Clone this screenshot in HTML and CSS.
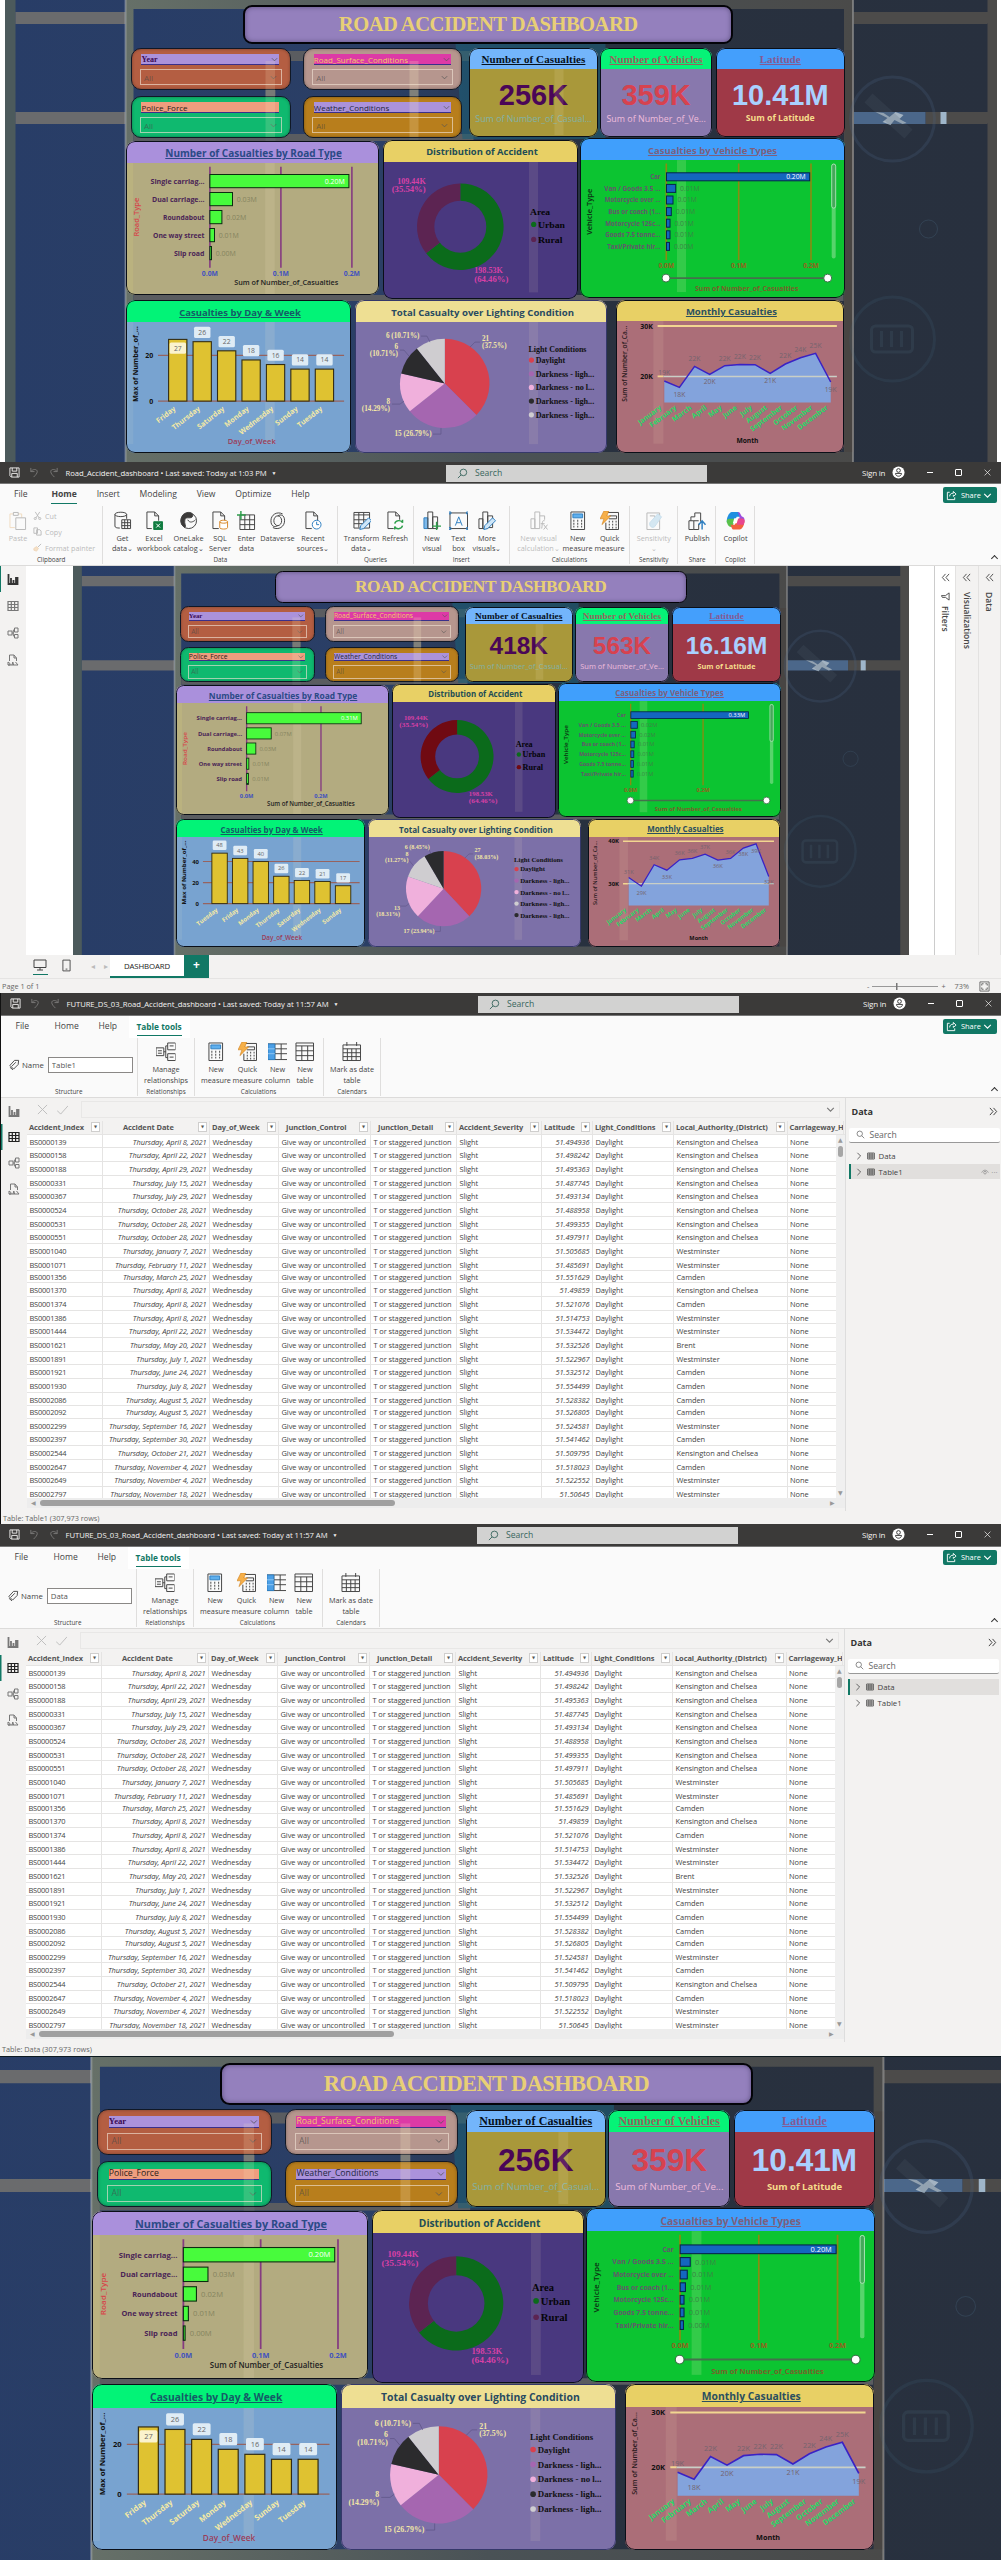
FILE: index.html
```html
<!DOCTYPE html>
<html lang="en">
<head>
<meta charset="utf-8">
<title>Road Accident Dashboard</title>
<link rel="stylesheet" href="styles.css">
</head>
<body>
<svg class="sprite" aria-hidden="true">
  <symbol id="save" viewBox="0 0 12 12"><path d="M1 1h10v10H2.5L1 9.500zM3.500 1v3.500h5V1M3 11V7h6v4" /></symbol>
  <symbol id="undo" viewBox="0 0 12 12"><path d="M2 1v4h4M2 5c2-3 7-3 7 0 0 2-2 4-4 6"/></symbol>
  <symbol id="redo" viewBox="0 0 12 12"><path d="M10 1v4H6M10 5C8 2 3 2 3 5c0 2 2 4 4 6"/></symbol>
  <symbol id="search" viewBox="0 0 12 12"><circle cx="7" cy="4.800" r="3.600"/><path d="M4.500 7.500 1 11"/></symbol>
  <symbol id="search-r" viewBox="0 0 12 12"><circle cx="5" cy="5" r="3.600"/><path d="M7.600 7.600 11 11"/></symbol>
  <symbol id="user" viewBox="0 0 14 14"><circle cx="7" cy="7" r="6.500" fill="#fff" stroke="none"/><circle cx="7" cy="4.800" r="2" stroke="#333"/><path d="M3.800 8h6.400c0 4-6.400 4-6.400 0z" stroke="#333"/></symbol>
  <symbol id="share" viewBox="0 0 12 12"><path d="M4 2.500H1.500v8h8V8M4 7c0-2.500 1.500-3.500 4-3.500V1.500L11 4.500 8 7V5.300"/></symbol>
  <symbol id="down" viewBox="0 0 10 10"><path d="M2 3.500 5 6.500 8 3.500"/></symbol>
  <symbol id="right" viewBox="0 0 10 10"><path d="M3 1 7 5 3 9"/></symbol>
  <symbol id="dbl-left" viewBox="0 0 10 10"><path d="M5 1 1.500 5 5 9M9 1 5.500 5 9 9"/></symbol>
  <symbol id="dbl-right" viewBox="0 0 10 10"><path d="M1 1 4.500 5 1 9M5 1l3.500 4L5 9"/></symbol>
  <symbol id="funnel" viewBox="0 0 10 10"><path d="M1 1h8L6 5v3.500L4 9.500V5z"/></symbol>
  <symbol id="v-report" viewBox="0 0 12 12"><path d="M1.500 1v10h9V4M4 5v6M6.500 7v4M9 4v7" stroke-width="1.800"/></symbol>
  <symbol id="v-table" viewBox="0 0 12 12"><path d="M1 1.500h10v9H1zM1 4.500h10M1 7.500h10M4.300 1.500v9M7.600 1.500v9" stroke-width="1.200"/></symbol>
  <symbol id="v-model" viewBox="0 0 12 12"><path d="M1 4h4v4H1zM7.500 1h3.500v4H7.500zM7.500 7.500h3.500V11H7.500zM5 6h1.300M7.500 3H6.300v6h1.200"/></symbol>
  <symbol id="v-dax" viewBox="0 0 12 12"><path d="M2.500 7V1H7l2.500 3v3M7 1v3h2.500M1 8v3h2V9.500zM5 11l.8-3 .8 3M8.500 8l2.500 3h-10"/></symbol>
  <symbol id="paste" viewBox="0 0 20 20"><path d="M7 17H2V3h12v4" stroke="#e3a85c"/><path d="M5.500 1.500h5v3h-5zM8 7h10v12H8z" fill="#fafafa"/></symbol>
  <symbol id="cut" viewBox="0 0 10 10"><path d="M2.500 1 7 8M7.500 1 3 8"/><circle cx="2.500" cy="8.400" r="1.200"/><circle cx="7.500" cy="8.400" r="1.200"/></symbol>
  <symbol id="copy" viewBox="0 0 10 10"><path d="M1 1h4v6H1zM4 3h3.500L9 4.500V9H4z"/></symbol>
  <symbol id="brush" viewBox="0 0 10 10"><path d="M9 1 5 5"/><path d="m1 6 3-2 2 2-2 3-3-1z" fill="#ecb26a" stroke="#dd9440"/></symbol>
  <symbol id="getdata" viewBox="0 0 20 20"><path d="M2 3.500C2 .5 14 .5 14 3.500S2 6.500 2 3.500v12c0 1.500 2 2 5 2M14 3.500V8"/><path d="M9 9h9v9H9zM9 12h9M9 15h9M12 9v9M15 9v9" fill="#fafafa"/></symbol>
  <symbol id="excel" viewBox="0 0 20 20"><path d="M8 18H3V1h8l4 4v5M11 1v4h4"/><path d="M10 11h9v8h-9z" fill="#107c41" stroke="#107c41"/><path d="m12.500 13 4 4M16.500 13l-4 4" stroke="#fff"/></symbol>
  <symbol id="onelake" viewBox="0 0 20 20"><circle cx="10" cy="10" r="8"/><path d="M4 4C8 0 15 1 14 5S7 5 6 9s2 7 0 8C1 14 1 8 4 4z" fill="#3b3a39"/><path d="M9 9c2 4 6 2 8 0"/></symbol>
  <symbol id="sql" viewBox="0 0 20 20"><path d="M9 18H3V1h8l4 4v5M11 1v4h4"/><path d="M10 11c0-2 8-2 8 0v6c0 2-8 2-8 0zM10 11c0 2 8 2 8 0" stroke="#d98a2b" fill="#fff"/></symbol>
  <symbol id="enter" viewBox="0 0 20 20"><path d="M3 4h15v15H3zM3 9h15M3 14h15M8 4v15M13 4v15"/><path d="M4 0v9M0 4h9" stroke="#2e9e4b" stroke-width="1.500"/></symbol>
  <symbol id="dataverse" viewBox="0 0 20 20"><path d="M15 3C9 0 3 4 3 10s4 7 7 5M5 17c6 3 12-1 12-7s-4-7-7-5"/><ellipse cx="10" cy="10" rx="4" ry="5"/></symbol>
  <symbol id="recent" viewBox="0 0 20 20"><path d="M9 18H3V1h8l4 4v5M11 1v4h4"/><circle cx="14" cy="14" r="4.500" stroke="#2f7fc1" fill="#fff"/><path d="M14 11v3h2.500" stroke="#2f7fc1"/></symbol>
  <symbol id="transform" viewBox="0 0 20 20"><path d="M2 1.500h16v16H2zM2 4h16M2 9h16M2 13h16M7 2v15M12 2v15"/><path d="m8 19 1-4 8-8 3 3-8 8z" fill="#cfe6f8" stroke="#2f7fc1"/></symbol>
  <symbol id="refresh" viewBox="0 0 20 20"><path d="M9 18H3V1h8l4 4v4M11 1v4h4"/><path d="M10 13c1-4 7-4 8-1V9M18 15c-1 4-7 4-8 1v3" stroke="#2e9e4b" stroke-width="1.500"/></symbol>
  <symbol id="newvisual" viewBox="0 0 20 20"><path d="M2 7h4v11H2z" fill="#7db9ea" stroke="#2f7fc1"/><path d="M6 1h5v17H6zM11 6h5v12h-5z"/><path d="M15 11v9M10.500 15.500h9" stroke="#2e9e4b" stroke-width="1.500"/></symbol>
  <symbol id="textbox" viewBox="0 0 20 20"><path d="M1 2h18v16H1z"/><path d="m6.500 15 3.500-9 3.500 9M8 12h4M0 1h2v2H0zM18 1h2v2h-2zM0 17h2v2H0zM18 17h2v2h-2z" stroke="#2f7fc1"/></symbol>
  <symbol id="morevisual" viewBox="0 0 20 20"><path d="M2 8h4v10H2zM6 1h5v17H6zM11 5h5v12h-5z"/><path d="m7 19 1-4 8-8 3 3-8 8z" fill="#cfe6f8" stroke="#2f7fc1"/></symbol>
  <symbol id="viscalc" viewBox="0 0 20 20"><path d="M2 8h4v10H2zM6 1h5v17H6zM11 5h5v4"/><path d="M16 10c-3-1-2 3-3 8M12 13h4M15 14l4 5M19 14l-4 5"/></symbol>
  <symbol id="measure" viewBox="0 0 20 20"><path d="M3 1h14v18H3z"/><path d="M5 3h10v4H5z" fill="#5fb0ee" stroke="#2f7fc1"/><path d="M5.500 10h1M9.500 10h1M13.500 10h1M5.500 13h1M9.500 13h1M13.500 13h1M5.500 16h1M9.500 16h1M13.500 16h1" stroke-width="2"/></symbol>
  <symbol id="quick" viewBox="0 0 20 20"><path d="M7 1.500h12v17.500H6v-7M9.500 5H17v3H9"/><path d="M9 11h1M12.500 11h1M16 11h1M9 14h1M12.500 14h1M16 14h1M9 17h1M12.500 17h1M16 17h1" stroke-width="1.800"/><path d="M4 0h5L7 5h4L2 14l2-6H0z" fill="#f6b04a" stroke="#cf7f1d" stroke-width=".6"/></symbol>
  <symbol id="column" viewBox="0 0 20 20"><path d="M0 2h20v16H0zM0 7h20M0 12h20M7 2v16M13.500 2v16"/><path d="M0 2h7v16H0z" fill="#4b9fe6" stroke="#2f7fc1"/><path d="M0 7h7M0 12h7" stroke="#8fc6f3"/></symbol>
  <symbol id="table" viewBox="0 0 20 20"><path d="M1 1h18v18H1zM1 4h18M1 9h18M1 14h18M7 4v15M13 4v15"/></symbol>
  <symbol id="calendar" viewBox="0 0 20 20"><path d="M1 3h18v16H1zM1 7h18M1 11h18M1 15h18M5.500 7v12M10 7v12M14.500 7v12M5 0v4M15 0v4"/></symbol>
  <symbol id="relations" viewBox="0 0 20 20"><path d="M0 6h8v8H0zM12 1h8v7h-8zM12 12h8v7h-8zM8 10h2M12 4h-2v12h2M14 4h4M14 15.500h4M2 9h4M2 11.500h4"/></symbol>
  <symbol id="sens" viewBox="0 0 20 20"><path d="M3 2h13v17H3zM6 5h5v5"/><path d="m6 12 8-9 4 3-7 10c-2 2-6 0-5-4z" fill="#8fc4e4" stroke="#6fb0d6"/></symbol>
  <symbol id="publish" viewBox="0 0 20 20"><path d="M2 10h5v9H2zM4 10V6h4V2h6v9M7 10h5M7 19h5v-6"/><path d="M15.500 19V11M12 14l3.500-4L19 14" stroke="#2f7fc1" stroke-width="1.500"/></symbol>
  <symbol id="copilot" viewBox="0 0 20 20"><g stroke="none"><path d="M6 1h6c3 0 2 5 4 5h-5L8 12H1C0 8 3 1 6 1z" fill="#1f8fe0"/><path d="M1 12c-1-3 1-4 3-4h5l-2 7c-1 3-5 1-6-3z" fill="#58c14a"/><path d="M12 1c3 0 3 4 5 5 3 1 2 5 1 8h-6l2-8z" fill="#9a4de0"/><path d="M8 19c-3 0-2-5-4-5h5l3-6h5c4 0 1 11-3 11z" fill="#f2603e"/><path d="M12 8h5c3 0 2 4 1 6h-7z" fill="#e8468f"/></g><path d="M8.500 7.500h4l-1.500 5H7z" fill="#fff" stroke="none"/></symbol>
  <symbol id="tag" viewBox="0 0 12 12"><path d="M1 7 6 1.500h4.500L10 6l-5 5zM3 8l4.500-4.500M1 9l3.500 3"/></symbol>
  <symbol id="cross" viewBox="0 0 12 12"><path d="m1 1 10 10M11 1 1 11"/></symbol>
  <symbol id="check" viewBox="0 0 12 12"><path d="m0 7 4 4 8-9"/></symbol>
  <symbol id="desktop" viewBox="0 0 14 12"><path d="M1 1h12v7.500H1zM7 8.500V11M4 11h6"/></symbol>
  <symbol id="phone" viewBox="0 0 10 14"><path d="M1 1h8v12H1zM4 11h2"/></symbol>
  <symbol id="fit" viewBox="0 0 12 12"><path d="M1 1h10v10H1zM3 5V3h2M7 3h2v2M9 7v2H7M5 9H3V7"/></symbol>
  <symbol id="eye" viewBox="0 0 12 8"><path d="M1 5c2-5 8-5 10 0"/><circle cx="6" cy="5" r="2"/></symbol>
</svg>

<section class="stage stage-top"><div class="board" data-set="filtered"></div></section>

<section class="window report">
  <header class="titlebar">
    <svg class="i"><use href="#save"/></svg><svg class="i dim"><use href="#undo"/></svg><svg class="i dim"><use href="#redo"/></svg>
    <span class="doc">Road_Accident_dashboard • Last saved: Today at 1:03 PM</span><span class="caret">▼</span>
    <div class="find"><svg class="i"><use href="#search"/></svg>Search</div>
    <span class="sign">Sign in</span><svg class="who"><use href="#user"/></svg>
    <span class="ctl min"></span><span class="ctl max"></span><svg class="ctl x"><use href="#cross"/></svg>
  </header>
  <nav class="tabs">
    <span>File</span><span class="on">Home</span><span>Insert</span><span>Modeling</span><span>View</span><span>Optimize</span><span>Help</span>
    <button class="share"><svg class="i"><use href="#share"/></svg>Share<svg class="i s"><use href="#down"/></svg></button>
  </nav>
  <div class="ribbon" data-ribbon="report"></div>
  <div class="work">
    <aside class="rail on-report"><svg class="i"><use href="#v-report"/></svg><svg class="i"><use href="#v-table"/></svg><svg class="i"><use href="#v-model"/></svg><svg class="i"><use href="#v-dax"/></svg></aside>
    <div class="canvas"><div class="board small" data-set="full"></div></div>
    <aside class="pane filters"><svg class="i"><use href="#dbl-left"/></svg><svg class="i"><use href="#funnel"/></svg><b>Filters</b></aside>
    <aside class="pane"><svg class="i"><use href="#dbl-left"/></svg><b>Visualizations</b></aside>
    <aside class="pane"><svg class="i"><use href="#dbl-left"/></svg><b>Data</b></aside>
  </div>
  <div class="pages">
    <span class="dev on"><svg><use href="#desktop"/></svg></span><span class="dev"><svg class="ph"><use href="#phone"/></svg></span>
    <span class="nav">◂</span><span class="nav">▸</span><span class="page">DASHBOARD</span><span class="add">+</span>
  </div>
  <footer class="status"><span>Page 1 of 1</span><span class="zoom">-<i class="track"></i>+</span><span class="pct">73%</span><svg class="i"><use href="#fit"/></svg></footer>
</section>

<section class="window tables first" data-name="Table1"></section>
<section class="window tables second" data-name="Data"></section>

<section class="stage stage-bottom"><div class="board large" data-set="filtered"></div></section>
<script src="script.js"></script>
</body>
</html>
```
FILE: styles.css
```css
* { box-sizing: border-box; }
body { margin: 0; width: 1001px; background: #fff; font-family: "Open Sans", "Noto Sans", sans-serif; font-size: 8px; color: #444; overflow-x: hidden; }
svg { fill: none; stroke: currentColor; stroke-width: 1; display: block; flex: none; }
svg text { stroke: none; }
.sprite { position: absolute; width: 0; height: 0; }
h1, h2, p { margin: 0; }
button { font: inherit; border: 0; }

/* dashboard canvas */
.stage { overflow: hidden; }
.stage-top { height: 462px; padding-left: 4.500px; background: #fff; }
.stage-bottom { height: 504px; border-top: 1px solid #0d1a20; background: #29395a; }
.board { position: relative; width: 992px; height: 462px; overflow: hidden; background: #293b60; }
.board.small { zoom: .842; }
.board.large { zoom: 1.089; margin-left: -37px; }
.scene, .glow { position: absolute; inset: 0; width: 992px; height: 462px; pointer-events: none; }
.board-body { position: relative; width: 720px; margin-left: 121.300px; padding-top: 5px; }
.title { width: 489.500px; height: 39px; margin-left: 117.700px; display: flex; align-items: center; justify-content: center; background: #9480bd; border: 2px solid #030308; border-radius: 9px; box-shadow: inset 0 0 5px #5d5080; color: #e8cf75; font: bold 20.600px "Liberation Serif", serif; letter-spacing: -.52px; }
.row { display: flex; align-items: flex-start; }
.row-top { margin: 3.700px 0 0 5.200px; }
.row-mid { height: 160px; margin-top: .6px; }
.row-low { margin-top: 1.400px; }
.slicers { display: grid; grid-template: 42px 42px / 160px 159px; gap: 6px 12.300px; margin-right: 7px; }
.slicer { border: 1px solid #101826; border-radius: 10px; padding: 5.600px 9.500px 0 9.500px; box-shadow: inset 0 0 3px rgba(0,0,0,.35); }
.slicer p { display: flex; justify-content: space-between; align-items: center; height: 10.500px; margin-right: 1px; border-bottom: 1px solid #3a2f8a; font-size: 8px; line-height: 9px; }
.slicer p svg, .slicer div svg { width: 9px; height: 9px; color: #555; stroke-width: .8; }
.slicer div { display: flex; justify-content: space-between; align-items: center; height: 16px; margin: 4.400px -1.500px 0 -1.500px; padding: 0 3px; border: 1px solid rgba(240,225,210,.65); color: rgba(70,70,70,.65); }
.year { background: #b45e42; } .year p { background: #ab92db; color: #3b0a54; font-family: "Liberation Serif", serif; font-weight: bold; }
.surface { background: #b6968e; } .surface p { background: #dd3aa6; color: #f0c86a; }
.police { background: #0fb96f; } .police p { background: #ef9d7e; color: #2a2118; }
.weather { background: #b87e1c; } .weather p { background: #ab92db; color: #222840; }
.kpi, .card { position: relative; overflow: hidden; border-radius: 9px; }
.kpi::after, .card::after { content: ""; position: absolute; inset: 0; border: 1.200px solid #0a0f18; border-radius: 9px; }
.kpi { height: 89px; margin-top: .6px; text-align: center; }
.kpi h2 { height: 20.400px; padding-top: 1.500px; display: flex; align-items: center; justify-content: center; font: bold 11px "Liberation Serif", serif; text-decoration: underline; letter-spacing: .1px; white-space: nowrap; }
.kpi strong { display: block; margin-top: 9px; font: bold 29px/34px "Liberation Sans", sans-serif; }
.kpi span { display: block; margin-top: 1.500px; font-size: 8.900px; line-height: 11px; white-space: nowrap; }
.k1 { width: 128.400px; margin-right: 2.600px; background: #a9983a; } .k1 h2 { background: #73b5fb; color: #06101c; } .k1 strong { color: #4a0657; } .k1 span { color: #82b2a6; }
.k2 { width: 111.700px; margin-right: 3.800px; background: #8878ad; } .k2 h2 { background: #06f377; color: #96645d; } .k2 strong { color: #d7424f; } .k2 span { color: #efbcdc; }
.k3 { width: 129px; background: #9f3947; } .k3 h2 { background: #449ffc; color: #865a92; } .k3 strong { color: #a9d0ff; } .k3 span { color: #f6dd8c; font-weight: bold; font-size: 8.700px; }
.card h2 { display: flex; align-items: center; justify-content: center; height: 21.600px; padding-top: 2px; font-size: 9.800px; white-space: nowrap; color: #2b4a86; }
.card svg { width: 100%; }
.u { text-decoration: underline; text-underline-offset: 1px; }
.road { width: 253.500px; height: 153.700px; margin-top: 3px; background: #b3ab80; } .road h2 { background: #aa90dc; font-size: 10px; padding-left: 2px; }
.dist { width: 195px; height: 159px; margin: 1.700px 2px 0 3.700px; background: #49387f; } .dist h2 { background: #e8d065; color: #224d55; font-size: 9.400px; padding-left: 3px; }
.veh { width: 265px; height: 160px; background: #0cc431; } .veh h2 { background: #409ffc; color: #7d5f7e; font-size: 9.500px; }
.day { width: 225.400px; height: 152.400px; margin-top: .6px; background: #78a3d0; } .day h2 { background: #02f377; color: #155b67; font-size: 9.500px; padding-left: 3px; }
.light { width: 252.300px; height: 152.400px; margin: .6px 8.300px 0 3.800px; background: #7c70a8; } .light h2 { background: #eedf93; color: #284a61; font-size: 9.600px; padding-left: 3px; } .light::after { border-color: #35386a; }
.month { width: 228.600px; height: 153px; background: #ab6e78; } .month h2 { background: #e8d065; color: #2b4f60; font-size: 9.500px; padding-left: 3px; }

/* Power BI window chrome */
.titlebar { position: relative; display: flex; align-items: center; height: 22.300px; background: #3b3a39; color: #f3f2f1; border-bottom: 1px solid #777; padding-left: 9px; }
.i { width: 11px; height: 11px; }
.titlebar > .i { margin-right: 8.500px; }
.dim { opacity: .35; }
.doc { font-size: 7.700px; margin-left: -2px; white-space: nowrap; letter-spacing: -.06px; }
.caret { font-size: 5px; margin-left: 5px; }
.find { position: absolute; left: 446px; top: 2.500px; width: 261px; height: 17px; display: flex; align-items: center; gap: 7px; padding-left: 11px; background: #d2d2d1; color: #39665e; font-size: 8.600px; }
.tables .find { left: 477px; }
.sign { position: absolute; left: 862px; font-size: 8px; letter-spacing: -.2px; }
.who { position: absolute; left: 892px; width: 13px; height: 13px; }
.ctl { position: absolute; stroke-width: 1.200; }
.min { left: 927px; width: 6px; border-top: 1px solid #fff; }
.max { left: 955px; width: 7px; height: 7px; border: 1px solid #fff; border-radius: 1px; }
.x { left: 984px; width: 7px; height: 7px; }
.tabs { position: relative; display: flex; height: 22px; background: #fafafa; font-size: 8.600px; line-height: 21px; }
.tabs span { position: relative; white-space: nowrap; }
.tabs .on { font-weight: bold; }
.tabs .on::after { content: ""; position: absolute; left: 0; right: 0; bottom: 2px; border-bottom: 1.500px solid #117865; }
.report .tabs { padding-left: 14px; gap: 19.800px; }
.report .tabs span:nth-child(2) { margin-left: 4px; }
.share { position: absolute; right: 4px; top: 3px; width: 54px; height: 15.500px; padding: 0 3px; display: flex; align-items: center; gap: 4px; background: #117865; color: #fff; border-radius: 2px; font-size: 7.400px; }
.share .s { margin-left: -3px; }
.ribbon { position: relative; display: flex; height: 60px; background: #fafafa; border-bottom: 1.500px solid #dcdbda; }
.ribbon::after { content: ""; position: absolute; right: 4px; bottom: 4px; width: 4px; height: 4px; border: solid #333; border-width: 1.200px 0 0 1.200px; transform: rotate(45deg); }
.group { display: grid; grid-template-rows: 50px 8px; height: 58px; border-right: 1px solid #dfdedd; }
.group > small { font-size: 6.300px; text-align: center; line-height: 8px; }
.tools { display: flex; padding-top: 4.500px; }
.tool { display: flex; flex-direction: column; align-items: center; font-size: 7.300px; line-height: 10.400px; text-align: center; white-space: nowrap; }
.tool > svg { width: 19.500px; height: 19.500px; margin-bottom: 2.500px; }
.off { opacity: .35; }
.clip { display: flex; flex-direction: column; gap: 6px; margin-left: 4px; opacity: .35; }
.clip span { display: flex; align-items: center; gap: 3px; line-height: 10px; font-size: 7.200px; white-space: nowrap; }
.clip svg { width: 9px; height: 9px; }
.work { display: flex; height: 389px; background: #fff; }
.rail { width: 26px; background: #f3f2f1; display: flex; flex-direction: column; align-items: center; gap: 15px; padding-top: 7px; color: #777; }
.rail .i { width: 12px; height: 12px; }
.on-report { background: linear-gradient(#117865, #117865) 0 0 / 1px 26px no-repeat #f3f2f1; }
.on-report .i:first-child { color: #333; }
.canvas { width: 909.500px; padding-left: 47.400px; border-right: 1px solid #ccc; overflow: hidden; }
.pane { width: 22.500px; background: #f3f2f1; display: flex; flex-direction: column; align-items: center; gap: 10px; padding-top: 7px; border-right: 1px solid #e3e2e1; }
.pane .i { width: 9px; height: 9px; }
.pane b { writing-mode: vertical-rl; font-size: 8.600px; line-height: 12px; font-weight: 600; }
.pane.filters { background: #fff; width: 21px; }
.pane.filters .i:nth-child(2) { transform: rotate(90deg); }
.pane.filters b { margin-top: -5px; }
.pages { display: flex; height: 23px; background: #f3f2f1; padding-left: 33px; }
.dev { width: 15px; margin-right: 14px; padding-top: 4px; height: 20px; }
.dev.on { border-bottom: 1.500px solid #117865; }
.dev svg { width: 14px; height: 12px; } .dev .ph { width: 9px; height: 13px; }
.nav { color: #bbb; width: 13px; line-height: 22px; }
.page { width: 74px; margin-left: -7px; background: #fff; border-bottom: 2px solid #117865; text-align: center; line-height: 22px; color: #222; font-size: 7.800px; letter-spacing: -.1px; }
.add { width: 25px; background: #117865; color: #fff; text-align: center; font-weight: bold; font-size: 12px; line-height: 20px; }
.status { display: flex; align-items: center; height: 15px; background: #f3f2f1; border-top: 1px solid #e5e4e3; padding: 0 11px 0 2px; font-size: 7.300px; color: #666; }
.zoom { margin-left: auto; display: flex; gap: 3px; align-items: center; }
.track { width: 66px; height: 7px; background: linear-gradient(#777,#777) 24px 0/1.500px 7px no-repeat, linear-gradient(#999,#999) 0 3px/66px 1px no-repeat; }
.pct { margin: 0 10px 0 9px; }

/* table view */
.tables { height: 531px; background: #f3f2f1; }
.tables.first { border-left: 1.500px solid #111; }
.tables.second { height: 532px; }
.tables .tabs { padding-left: 14.500px; }
.tables .tabs span:nth-child(1) { width: 39px; } .tables .tabs span:nth-child(2) { width: 44px; } .tables .tabs span:nth-child(3) { width: 38px; }
.tables .tabs .on { color: #117865; background: #fff; box-shadow: -8px 0 #fff, 8px 0 #fff; font-size: 8.300px; }
.name { display: flex; align-items: center; padding: 11px 0 0 8px; gap: 2px; font-size: 7.800px; height: 34px; }
.name input { width: 85px; height: 16px; margin-left: 2px; border: 1px solid #8a8886; background: #fff; color: #555; font: inherit; padding: 0 3px; }
.frame { display: grid; grid-template-columns: 26px 817.500px 1fr; height: 413px; }
.frame .rail { padding-top: 7px; gap: 14px; }
.frame .rail .i:nth-child(2) { color: #222; }
.frame .rail { background: linear-gradient(#117865, #117865) 0 26px / 1.500px 26px no-repeat #f3f2f1; }
.formula { display: flex; align-items: center; gap: 9px; height: 23px; padding: 2px 5px 2px 10px; color: #bbb; }
.formula .bar { flex: 1; height: 17px; margin-left: 4px; border: 1px solid #e8e7e6; display: flex; justify-content: flex-end; align-items: center; padding-right: 3px; color: #777; }
.grid { position: relative; height: 377px; overflow: hidden; background: #fff; }
.r { display: grid; grid-template-columns: 76px 107px 69px 92px 86px 85px 51px 81px 113.500px 56px; height: 13.670px; line-height: 13px; font-size: 7.450px; border-bottom: 1px solid #e5e4e3; }
.r span { border-right: 1px solid #e5e4e3; padding: 1px 2.500px 0; white-space: nowrap; overflow: hidden; letter-spacing: -.08px; }
.r:nth-child(10n+2):not(:nth-child(2)) { margin-top: -1.400px; }
.r .d, .r .n { text-align: right; font-style: italic; }
.r .k { letter-spacing: -.2px; }
.head { height: 14px; background: #f3f2f1; font-weight: bold; }
.head span { display: flex; justify-content: space-between; align-items: center; padding: 0 2px; color: #555; overflow: hidden; }
.head span i { flex: none; width: 9px; height: 10px; border: 1px solid #cfcecd; background: #fff; font: 4px/8px "DejaVu Sans", sans-serif; text-align: center; }
.head span:nth-child(4), .head span:nth-child(5) { padding-left: 7px; }
.head span:nth-child(2) { padding-left: 20px; }
.vbar { position: absolute; right: 0; top: 14px; bottom: 0; width: 8.500px; background: #f0f0f0; display: flex; flex-direction: column; align-items: center; font: 6px/10px "DejaVu Sans", sans-serif; color: #999; }
.vbar i { width: 5.500px; height: 11px; border-radius: 3px; background: #a6a6a6; margin-top: 1px; margin-bottom: auto; }
.hbar { display: flex; align-items: center; height: 10px; padding: 0 10px 0 4px; background: #ededed; font: 6px/10px "DejaVu Sans", sans-serif; color: #999; }
.hbar i { width: 355px; height: 6px; margin: 0 auto 0 4px; border-radius: 3px; background: #a0a0a0; }
.fields { border-left: 1px solid #ddd; padding: 7px 2px 0; }
.fields header { display: flex; justify-content: space-between; align-items: center; padding: 0 2px 0 4px; font-weight: bold; font-size: 9px; color: #333; height: 13px; }
.fields header svg { width: 9px; height: 9px; }
.fields .box { display: flex; align-items: center; gap: 5px; width: 151px; height: 15.500px; margin: 10px 0 5px 1px; padding-left: 7px; border-radius: 2px; border-bottom: 1px solid #999; background: #fff; color: #666; font-size: 8.600px; }
.fields .box .i { width: 9px; height: 9px; }
.fields .f { display: flex; align-items: center; gap: 4px; width: 151px; height: 15.700px; margin-left: 1px; padding: 0 2px 0 4px; font-size: 7.800px; border-left: 2px solid transparent; }
.fields .f .i { width: 8px; height: 8px; }
.fields .f.on { background: #e1dfdd; border-color: #117865; }
.fields .f em { margin-left: auto; display: flex; align-items: center; gap: 2px; font-style: normal; color: #888; }
.tables .status { height: 14px; border: 0; }
```
FILE: script.js
```js
const icon = (id, cls = 'i') => `<svg class="${cls}"><use href="#${id}"/></svg>`;

/* ---------- dashboards ---------- */
const months = ['January','February','March','April','May','June','July','August','September','October','November','December'];
const sets = {
  filtered: {
    kpi: ['256K', '359K', '10.41M'], policeArrow: false,
    roadTicks: [[209.7,'0.0M'],[280.7,'0.1M'],[351.7,'0.2M']],
    road: [[348.7,'0.20M'],[232.3,'0.03M'],[221.7,'0.02M'],[214.3,'0.01M'],[211.3,'0.00M']],
    rural: '#5c2452',
    vehTicks: [[666.3,'0.0M'],[738.7,'0.1M'],[811,'0.2M']],
    veh: [[809.7,'0.20M'],[675.7,'0.01M'],[673,'0.01M'],[671.3,'0.01M'],[670,'0.01M'],[670,'0.01M'],[669.5,'0.00M']],
    unit: 2.285, dayTicks: [0,20], inside: 0,
    days: [['Friday',27],['Thursday',26],['Saturday',22],['Monday',18],['Wednesday',16],['Sunday',14],['Tuesday',14]],
    pie: [[21,'#d8414e'],[15,'#a566b0'],[8,'#f0b0dc'],[6,'#2b2b2d'],[6,'#cfcdd0']],
    pieText: [[482,338.3,'21','start'],[482,345,'(37.5%)','start'],[419.5,335.7,'6 (10.71%)','end'],[398,346.3,'6','end'],[398,353.3,'(10.71%)','end'],[390,401.3,'8','end'],[390,408.7,'(14.29%)','end'],[413,433.3,'15 (26.79%)','middle']],
    mTicks: ['30K','20K'],
    my: [381.3,387.7,366.7,374.7,366,364.7,365,373.7,364.3,358,353.7,382.3],
    ml: [[373.3,'19K'],[395.3,'18K'],[359,'22K'],[382.3,'20K'],[359,'22K'],[357,'22K'],[357.5,'22K'],[381.3,'21K'],[356.3,'22K'],[350.3,'24K'],[346,'25K'],[390,'19K']]
  },
  full: {
    kpi: ['418K', '563K', '16.16M'], policeArrow: true,
    roadTicks: [[209.7,'0.0M'],[298,'0.2M']],
    road: [[345.8,'0.31M'],[238.9,'0.07M'],[220.6,'0.03M'],[212.3,'0.01M'],[212,'0.01M']],
    rural: '#700a12',
    vehTicks: [[666.3,'0.0M'],[752.3,'0.2M']],
    veh: [[806.2,'0.33M'],[674.2,'0.02M'],[672,'0.02M'],[670.5,'0.01M'],[670,'0.01M'],[669.5,'0.01M'],[669.3,'0.01M']],
    unit: 1.248, dayTicks: [0,20,40], inside: -1,
    days: [['Tuesday',48],['Friday',43],['Monday',40],['Thursday',26],['Saturday',22],['Wednesday',21],['Sunday',17]],
    pie: [[27,'#d8414e'],[17,'#a566b0'],[13,'#f0b0dc'],[8,'#cfcdd0'],[6,'#2b2b2d']],
    pieText: [[481.6,337.7,'27','start'],[481.6,345.6,'(38.03%)','start'],[428.5,333.7,'6 (8.45%)','end'],[403,342,'8','end'],[403,348.8,'(11.27%)','end'],[393,405.5,'13','end'],[393,413,'(18.31%)','end'],[415.6,433.6,'17 (23.94%)','middle']],
    mTicks: ['40K','30K'],
    my: [369.4,379.7,354.3,360.7,348.4,346.8,341.7,348.8,346.8,334.5,329.4,368.2],
    ml: [[362.3,'31K'],[388,'29K'],[346.4,'34K'],[369,'33K'],[340.5,'36K'],[338.1,'36K'],[333.7,'37K'],[356,'36K'],[338.5,'36K'],[342,'38K'],[337.7,'39K'],[375,'32K']]
  }
};

const T = (x, y, s, o = {}) => {
  const t = o.rot !== undefined ? ` transform="rotate(${o.rot} ${x} ${y})"` : '';
  const l = o.len ? ` textLength="${o.len}" lengthAdjust="spacingAndGlyphs"` : '';
  const f = o.serif ? "'Liberation Serif', serif" : "'Open Sans', sans-serif";
  return `<text x="${x}" y="${y}" dy=".36em" font-size="${o.size || 7}" fill="${o.fill || '#111'}" text-anchor="${o.a || 'start'}" font-weight="${o.w || 400}" font-family="${f}"${t}${l}>${s}</text>`;
};
const V = (x, y1, y2, c) => `<path d="M${x} ${y1}V${y2}" stroke="${c}" stroke-width="1.6"/>`;
const H = (y, x1, x2, c, w = 1.3) => `<path d="M${x1} ${y}H${x2}" stroke="${c}" stroke-width="${w}"/>`;
const R = (x, y, w, h, f, s = 'none', r = 0, sw = 1) => `<rect x="${x}" y="${y}" width="${w}" height="${h}" fill="${f}" stroke="${s}" rx="${r}" stroke-width="${sw}"/>`;
const strip = (x, y, w, h, o = .13) => R(x, y, w, h, `rgba(255,240,200,${o})`);
const card = (cls, title, u, box, body) =>
  `<article class="card ${cls}"><h2><span class="${u ? 'u' : ''}">${title}</span></h2><svg viewBox="${box.join(' ')}">${body}</svg></article>`;

function roadChart(d) {
  const names = ['Single carriag...','Dual carriage...','Roundabout','One way street','Slip road'];
  const lens = [54, 52.5, 41.5, 51.5, 30.5];
  let s = strip(265, 160, 9.5, 140) + R(125, 160, 8, 140, 'rgba(230,220,120,.15)');
  d.roadTicks.forEach(([x, t]) => s += V(x, 166.7, 267.7, '#853b80') + T(x, 273.3, t, {a:'middle', fill:'#4152bf', w:700, size:6.8}));
  d.road.forEach(([x, t], i) => {
    const y = 181 + i * 18;
    s += R(209.7, y - 6.6, x - 209.7, 13.2, '#48fb3c', '#0b2d10') + T(204.3, y, names[i], {a:'end', fill:'#4a2456', w:700, size:7.2, len:lens[i]});
    s += i ? T(x + 4.3, y, t, {fill:'#85845f', size:7}) : T(x - 4, y, t, {a:'end', fill:'#fff', size:7});
  });
  return s + T(286, 282.7, 'Sum of Number_of_Casualties', {a:'middle', len:104, w:600, size:7.3, fill:'#222'}) + T(136, 217, 'Road_Type', {a:'middle', rot:-90, len:39, fill:'#d8454a', w:600});
}
function arc(cx, cy, r, a, b) {
  const p = t => `${cx + r * Math.sin(t)} ${cy - r * Math.cos(t)}`;
  return `M${cx} ${cy}L${p(a)}A${r} ${r} 0 ${b - a > Math.PI ? 1 : 0} 1 ${p(b)}Z`;
}
function pie(cx, cy, r, parts) {
  const sum = parts.reduce((n, p) => n + p[0], 0);
  let a = 0;
  return parts.map(([v, c]) => { const b = a + v / sum * 2 * Math.PI; const s = `<path d="${arc(cx, cy, r, a, b)}" fill="${c}" stroke="none"/>`; a = b; return s; }).join('');
}
function distChart(d) {
  const p = {fill:'#d840a6', serif:1, w:700, size:7.4}, L = {serif:1, w:700, size:9.2, fill:'#050508'};
  return strip(529, 160, 9, 132, .1) + pie(460.3, 226.3, 43.3, [[64.46,'#0b6b1b'],[35.54,d.rural]]) + `<circle cx="460.3" cy="226.3" r="26" fill="#49387f" stroke="none"/>`
    + T(425.7,180.7,'109.44K',{...p,a:'end',len:28.5}) + T(425.7,189,'(35.54%)',{...p,a:'end',len:34}) + T(474.3,270.3,'198.53K',{...p,len:28.5}) + T(474.3,278.7,'(64.46%)',{...p,len:34})
    + T(530,211.7,'Area',{...L,len:20}) + T(538,224,'Urban',{...L,len:27}) + T(538,239,'Rural',{...L,len:24.5})
    + `<circle cx="533.7" cy="224" r="2.6" fill="#0b6b1b" stroke="none"/><circle cx="533.7" cy="239" r="2.6" fill="${d.rural}" stroke="none"/>`;
}
function vehChart(d) {
  const names = ['Car','Van / Goods 3.5 ...','Motorcycle over ...','Bus or coach (1...','Motorcycle 125c...','Goods 7.5 tonne...','Taxi/Private hir...'];
  const lens = [10.5,56.5,56,52.5,55.5,55.5,53.5];
  let s = strip(677, 160, 9, 132, .16);
  d.vehTicks.forEach(([x, t]) => s += V(x, 163.3, 260, '#8a8b12') + T(x, 265.3, t, {a:'middle', fill:'#96621e', w:700, size:6.6}));
  d.veh.forEach(([x, t], i) => {
    const y = 176.7 + i * 11.6;
    s += R(666.5, y - 4, x - 666.5, 8, '#1466bf', '#06264b') + T(660.7, y, names[i], {a:'end', fill:'#65566c', w:700, size:6.5, len:lens[i]});
    s += i ? T(x + 4.4, y, t, {fill:'#3b8446', size:6.8}) : T(x - 4, y, t, {a:'end', fill:'#fff', size:6.8});
  });
  s += R(831.7, 163.5, 4, 95, '#58d46c', 'none', 2) + R(831.7, 164, 4, 44, '#45a85a', '#b9e9c0', 2, .8);
  s += H(278, 666, 827.7, '#44704c', 1.8) + '<circle cx="666" cy="278" r="4" fill="#fff" stroke="#3c7048"/><circle cx="827.7" cy="278" r="4" fill="#fff" stroke="#3c7048"/>';
  return s + T(746.7, 288.3, 'Sum of Number_of_Casualties', {a:'middle', len:103.5, w:700, fill:'#78612a'}) + T(589.3, 211.7, 'Vehicle_Type', {a:'middle', rot:-90, len:46, w:600, fill:'#0b3313'});
}
function dayChart(d) {
  let s = strip(265, 320, 9.5, 124) + strip(125, 320, 8, 124, .08);
  d.dayTicks.forEach(v => s += H(401 - v * d.unit, 157.8, 343.9, '#96635f') + T(153, 401 - v * d.unit, v, {a:'end', w:700, size:7}));
  d.days.forEach(([n, v], i) => {
    const x = 168.4 + i * 24.45, top = 401 - v * d.unit, ly = i === d.inside ? top + 8.7 : top - 9.3;
    s += R(x, top, 18.3, 401 - top, '#dfc231', '#332c12', 0, 1.1);
    s += R(x + 1, ly - 5.6, 16.4, 11.2, i === d.inside ? '#fbf3cd' : '#dfecf5', 'none', 1.5) + T(x + 9.2, ly, v, {a:'middle', fill:'#666', size:6.8});
    s += T(x + 6, 407.5, n, {a:'end', rot:-38, fill:'#f3e9a5', w:700, size:7.2});
  });
  return s + T(251.6, 441.3, 'Day_of_Week', {a:'middle', fill:'#9c3c58', w:600, size:7.4, len:48}) + T(135.4, 364, 'Max of Number_of_...', {a:'middle', rot:-90, len:76, w:700, size:7});
}
function lightChart(d) {
  const names = ['Daylight','Darkness - ligh...','Darkness - no l...','Darkness - ligh...','Darkness - ligh...'];
  let s = strip(529, 320, 9, 124, .1) + pie(444.8, 383.3, 44.7, d.pie);
  s += '<g stroke="#5f5688" stroke-width=".7"><path d="M470 347l5-5h5M421 336h6l3 6M400 350h4l5 6M392 404h8l4-3M433 434h8v-6"/></g>';
  d.pieText.forEach(([x, y, t, a]) => s += T(x, y, t, {a, serif:1, w:700, size:7.2, fill:'#f2e6a6'}));
  s += T(528.5, 348.7, 'Light Conditions', {serif:1, w:700, size:8.4, len:58});
  names.forEach((n, i) => s += `<circle cx="531.4" cy="${360 + i * 13.67}" r="2.6" fill="${d.pie[i][1]}" stroke="none"/>` + T(535.7, 360 + i * 13.67, n, {serif:1, w:700, size:8, len: i ? 58.5 : 29.5}));
  return s;
}
function monthChart(d) {
  const px = i => 663.9 + i * 15.13;
  const line = d.my.map((y, i) => `${px(i)} ${y}`).join('L');
  let s = strip(653, 320, 10, 124, .1) + `<path d="M${line}V402.7H663.9Z" fill="#83a3dc" stroke="none"/>`;
  s += H(326.3, 657.2, 836.5, '#f2d690', 1.8) + H(376.7, 657.2, 663, '#f2d690', 1.8) + H(376.7, 663, 836.5, '#c9cfc6', 1.5);
  s += T(652.4, 326.3, d.mTicks[0], {a:'end', w:700, size:7}) + T(652.4, 376.7, d.mTicks[1], {a:'end', w:700, size:7});
  s += `<path d="M${line}" stroke="#3a22c4" stroke-width="1.5"/>`;
  d.ml.forEach(([y, t], i) => s += T(px(i), y, t, {a:'middle', fill:'#74646e', size:6.8}));
  months.forEach((m, i) => s += T(px(i) - 4, 407, m, {a:'end', rot:-37, fill:'#27d968', size:7, w:700}));
  return s + T(747, 440.7, 'Month', {a:'middle', w:700, size:7.2, len:22}) + T(624, 364, 'Sum of Number_of_Ca...', {a:'middle', rot:-90, len:76, w:600, size:7, fill:'#2a1a20'});
}

const scene = id => `<svg class="scene" viewBox="4.5 0 992 462">
<defs><linearGradient id="g${id}"><stop offset="0" stop-color="#283d67"/><stop offset=".35" stop-color="#2b3f65"/><stop offset=".65" stop-color="#28313f"/><stop offset="1" stop-color="#28303e"/></linearGradient>
<linearGradient id="f${id}"><stop offset="0" stop-color="#667068"/><stop offset=".5" stop-color="#4a5256"/><stop offset="1" stop-color="#4a4a49"/></linearGradient></defs>
<g stroke="none"><rect x="4" width="994" height="462" fill="url(#g${id})"/>
<path d="M4 0h11v462H4z" fill="#4c5a5c"/><path d="M15 12h110v12H15zM15 112h110v12H15z" fill="#6a6b6d"/>
<path d="M987 0h11v462h-11zM853 12h134v12H853zM925 112h62v12h-62z" fill="#4c4b4a"/><path d="M853 112h72v12h-72z" fill="#4b678a"/>
<path d="M125 0h728v462H125z" fill="url(#f${id})"/><path d="M133 9h710.500v443H133z" fill="url(#g${id})"/>
<path d="M133 51h340v10H133zM133 134h340v7H133zM133 295h710v6H133z" fill="#5a5c60"/><path d="M265 61h10v80h-10zM409 61h9v80h-9z" fill="#5f6468"/>
<path d="M455 44h150v95H462z" fill="#1d5f78" opacity=".6"/><path d="M844 50h9v402h-9z" fill="#484543"/>
<path d="M875 112l8 1 6 4 6-5 8 3-4 4 7 4-4 1-8-4-4 5-8-3 5-4z" fill="#a3b3c2"/><path d="M940 112h6v12h-6z" fill="#9fb6ca"/></g>
<g stroke="#fff" fill="none"><path d="M125 0v462M852.500 0v462" opacity=".28" stroke-width="2"/><circle cx="892" cy="119" r="42" stroke="#49617f" stroke-width="3" opacity=".25"/><circle cx="892" cy="339" r="42" stroke="#466a80" stroke-width="3" opacity=".16"/><rect x="871" y="326" width="41" height="26" rx="4" stroke="#557487" stroke-width="3" opacity=".16"/><path d="M881 331v16M891 331v16M901 331v16" stroke="#557487" stroke-width="3" opacity=".16"/><circle cx="928" cy="229" r="9" stroke="#446077" opacity=".35"/><path d="M868 98l40 36" stroke="#52606e" stroke-width="12" opacity=".2"/></g></svg>`;

document.querySelectorAll('.board').forEach((el, n) => {
  const d = sets[el.dataset.set];
  const slicer = (c, t, arrow = true) => `<div class="slicer ${c}"><p>${t}${arrow ? icon('down') : ''}</p><div>All${icon('down')}</div></div>`;
  el.innerHTML = scene(n) + `<div class="board-body"><h1 class="title">ROAD ACCIDENT DASHBOARD</h1>
  <div class="row row-top"><div class="slicers">${slicer('year','Year')}${slicer('surface','Road_Surface_Conditions')}${slicer('police','Police_Force',d.policeArrow)}${slicer('weather','Weather_Conditions')}</div>
  <article class="kpi k1"><h2>Number of Casualties</h2><strong>${d.kpi[0]}</strong><span>Sum of Number_of_Casual...</span></article>
  <article class="kpi k2"><h2>Number of Vehicles</h2><strong>${d.kpi[1]}</strong><span>Sum of Number_of_Ve...</span></article>
  <article class="kpi k3"><h2>Latitude</h2><strong>${d.kpi[2]}</strong><span>Sum of Latitude</span></article></div>
  <div class="row row-mid">${card('road','Number of Casualties by Road Type',1,[125.8,162.9,253.5,132.1],roadChart(d))}${card('dist','Distribution of Accident',0,[383,161.6,195,137.4],distChart(d))}${card('veh','Casualties by Vehicle Types',1,[580,159.9,265,138.4],vehChart(d))}</div>
  <div class="row row-low">${card('day','Casualties by Day &amp; Week',1,[125.8,321.9,225.4,130.8],dayChart(d))}${card('light','Total Casualty over Lighting Condition',0,[355,321.9,252.3,130.8],lightChart(d))}${card('month','Monthly Casualties',1,[615.6,321.3,228.6,131.4],monthChart(d))}</div></div>
  <svg class="glow" viewBox="4.5 0 992 462">${strip(265,61,9.500,76,.16)}${strip(409,61,9,76,.2)}${strip(554,69,9,66,.12)}</svg>`;
});

/* ---------- ribbons ---------- */
const tool = (w, id, a, b = '', cls = '') => `<div class="tool ${cls}" style="width:${w}px">${icon(id, '')}<span>${a}</span><span>${b}</span></div>`;
const group = (w, label, body, pad = 0) => `<div class="group" style="width:${w}px"><div class="tools" style="padding-left:${pad}px">${body}</div><small>${label}</small></div>`;
document.querySelector('[data-ribbon=report]').innerHTML =
  group(103.4, 'Clipboard', tool(22,'paste','Paste','','off') + `<div class="clip"><span>${icon('cut')}Cut</span><span>${icon('copy')}Copy</span><span>${icon('brush')}Format painter</span></div>`, 7)
  + group(235, 'Data', tool(31,'getdata','Get','data⌄') + tool(32,'excel','Excel','workbook') + tool(37,'onelake','OneLake','catalog⌄') + tool(26,'sql','SQL','Server') + tool(27,'enter','Enter','data') + tool(35,'dataverse','Dataverse') + tool(36,'recent','Recent','sources⌄'), 3.6)
  + group(75.4, 'Queries', tool(37,'transform','Transform','data⌄') + tool(30,'refresh','Refresh'), 4.6)
  + group(95.8, 'Insert', tool(28,'newvisual','New','visual') + tool(25,'textbox','Text','box') + tool(32,'morevisual','More','visuals⌄'), 4.2)
  + group(120.7, 'Calculations', tool(46,'viscalc','New visual','calculation⌄','off') + tool(32,'measure','New','measure') + tool(32,'quick','Quick','measure'), 6)
  + group(47.9, 'Sensitivity', tool(47,'sens','Sensitivity','⌄','off'))
  + group(38.3, 'Share', tool(38,'publish','Publish'))
  + group(38.9, 'Copilot', tool(38,'copilot','Copilot'));

/* ---------- table view ---------- */
const heads = ['Accident_Index','Accident Date','Day_of_Week','Junction_Control','Junction_Detail','Accident_Severity','Latitude','Light_Conditions','Local_Authority_(District)','Carriageway_H'];
const K = 'Kensington and Chelsea', W = 'Westminster', C = 'Camden';
const rows = [['0139','April 8','494936',K],['0158','April 22','498242',K],['0188','April 29','495363',K],['0331','July 15','487745',K],['0367','July 29','493134',K],['0524','October 28','488958',K],['0531','October 28','499355',K],['0551','October 28','497911',K],['1040','January 7','505685',W],['1071','February 11','485691',W],['1356','March 25','551629',C],['1370','April 8','49859',K],['1374','April 8','521076',C],['1386','April 8','514753',W],['1444','April 22','534472',W],['1621','May 20','532526','Brent'],['1891','July 1','522967',W],['1921','June 24','532512',C],['1930','July 8','554499',C],['2086','August 5','528382',C],['2092','August 5','526805',C],['2299','September 16','524581',W],['2397','September 30','541462',C],['2544','October 21','509795',K],['2647','November 4','518023',C],['2649','November 4','522552',W],['2797','November 18','50645',W]];
document.querySelectorAll('.tables').forEach(el => {
  const name = el.dataset.name;
  const field = n => `<div class="f ${n === name ? 'on' : ''}">${icon('right')}${icon('v-table')}${n}${n === name && n === 'Table1' ? `<em>${icon('eye')}···</em>` : ''}</div>`;
  el.innerHTML = `<header class="titlebar">${icon('save')}${icon('undo','i dim')}${icon('redo','i dim')}<span class="doc">FUTURE_DS_03_Road_Accident_dashboard • Last saved: Today at 11:57 AM</span><span class="caret">▼</span>
  <div class="find">${icon('search')}Search</div><span class="sign">Sign in</span>${icon('user','who')}<span class="ctl min"></span><span class="ctl max"></span>${icon('cross','ctl x')}</header>
  <nav class="tabs"><span>File</span><span>Home</span><span>Help</span><span class="on">Table tools</span><button class="share">${icon('share')}Share${icon('down','i s')}</button></nav>
  <div class="ribbon">${group(136.5,'Structure',`<label class="name">${icon('tag')}Name <input value="${name}"></label>`)}${group(57,'Relationships',tool(57,'relations','Manage','relationships'))}${group(129,'Calculations',tool(32,'measure','New','measure')+tool(31,'quick','Quick','measure')+tool(29,'column','New','column')+tool(26,'table','New','table'),5.5)}${group(57.2,'Calendars',tool(57,'calendar','Mark as date','table'))}</div>
  <div class="frame"><aside class="rail">${icon('v-report')}${icon('v-table')}${icon('v-model')}${icon('v-dax')}</aside>
  <main><div class="formula">${icon('cross')}${icon('check')}<div class="bar">${icon('down')}</div></div>
  <div class="grid"><div class="r head">${heads.map((h, i) => `<span>${h}${i < 9 ? '<i>▼</i>' : ''}</span>`).join('')}</div>
  ${rows.map(r => `<div class="r"><span class="k">BS000${r[0]}</span><span class="d">Thursday, ${r[1]}, 2021</span><span>Wednesday</span><span>Give way or uncontrolled</span><span>T or staggered junction</span><span>Slight</span><span class="n">51.${r[2]}</span><span>Daylight</span><span>${r[3]}</span><span>None</span></div>`).join('')}
  <div class="vbar">▲<i></i>▼</div></div><div class="hbar">◀<i></i>▶</div></main>
  <aside class="fields"><header>Data${icon('dbl-right')}</header><div class="box">${icon('search-r')}Search</div>${field('Data')}${field('Table1')}</aside></div>
  <footer class="status">Table: ${name} (307,973 rows)</footer>`;
});
```
